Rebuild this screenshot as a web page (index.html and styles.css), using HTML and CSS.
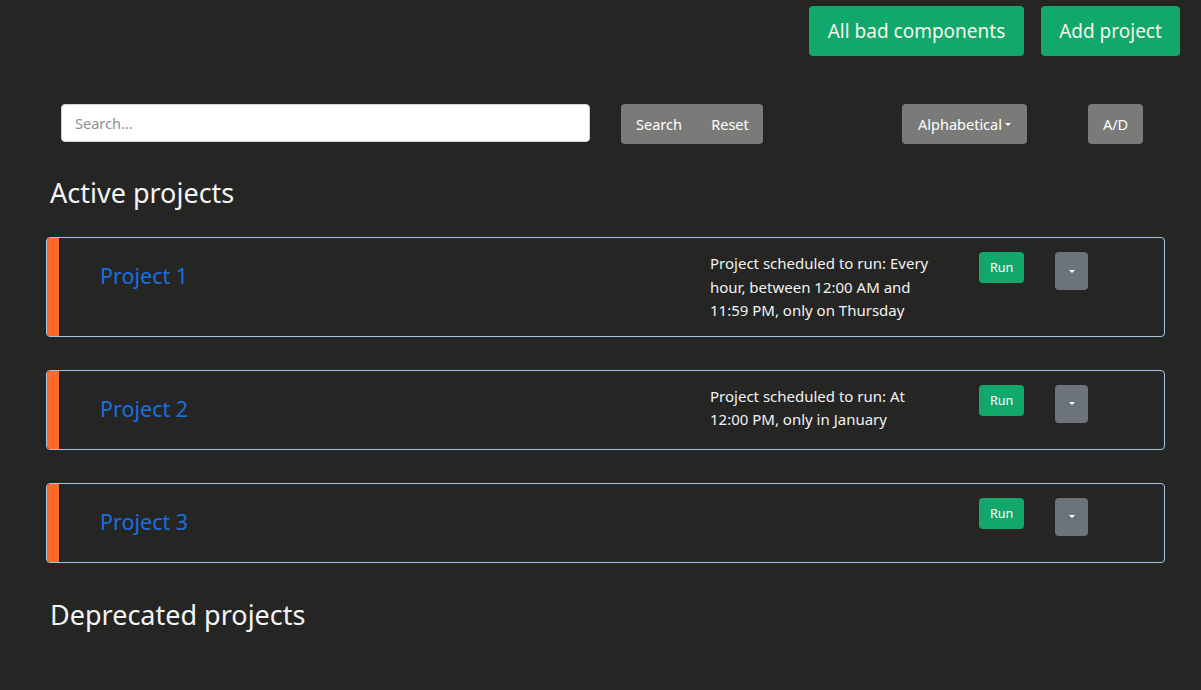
FILE: index.html
```html
<!DOCTYPE html>
<html lang="en">
<head>
<meta charset="utf-8">
<title>Projects</title>
<link rel="stylesheet" href="styles.css">
</head>
<body>
<div class="page">
  <div class="topbar">
    <button class="btn btn-green btn-lg">All bad components</button>
    <button class="btn btn-green btn-lg">Add project</button>
  </div>

  <div class="toolbar">
    <input class="search" type="text" placeholder="Search...">
    <div class="btn-group">
      <button class="btn btn-gray">Search</button>
      <button class="btn btn-gray">Reset</button>
    </div>
    <button class="btn btn-gray sort">Alphabetical<span class="caret"></span></button>
    <button class="btn btn-gray ad">A/D</button>
  </div>

  <h2 class="section-title">Active projects</h2>

  <div class="cards">
    <div class="card">
      <div class="card-bar"></div>
      <div class="card-body">
        <a class="card-title" href="#">Project 1</a>
        <div class="schedule">Project scheduled to run: Every hour, between 12:00 AM and 11:59 PM, only on Thursday</div>
        <button class="btn btn-green btn-sm">Run</button>
        <button class="btn btn-dd"><span class="caret"></span></button>
      </div>
    </div>
    <div class="card">
      <div class="card-bar"></div>
      <div class="card-body">
        <a class="card-title" href="#">Project 2</a>
        <div class="schedule">Project scheduled to run: At 12:00 PM, only in January</div>
        <button class="btn btn-green btn-sm">Run</button>
        <button class="btn btn-dd"><span class="caret"></span></button>
      </div>
    </div>
    <div class="card">
      <div class="card-bar"></div>
      <div class="card-body">
        <a class="card-title" href="#">Project 3</a>
        <div class="schedule"></div>
        <button class="btn btn-green btn-sm">Run</button>
        <button class="btn btn-dd"><span class="caret"></span></button>
      </div>
    </div>
  </div>

  <h2 class="section-title deprecated">Deprecated projects</h2>
</div>
</body>
</html>
```

FILE: styles.css
```css
* { box-sizing: border-box; }

html, body {
  margin: 0;
  background: #252624;
  height: 100%;
}

body {
  font-family: "Noto Sans", "Open Sans", sans-serif;
  color: #f2f2f2;
}

.page {
  padding: 6px 21px 0 0;
}

.btn {
  border: none;
  font-family: inherit;
  color: #fff;
  cursor: pointer;
  border-radius: 4px;
  display: inline-flex;
  align-items: center;
  justify-content: center;
  padding: 0;
  white-space: nowrap;
}

.btn-green { background: #13a86b; }
.btn-gray { background: #7a7b78; }

.topbar {
  display: flex;
  justify-content: flex-end;
  gap: 17px;
}

.btn-lg {
  height: 50px;
  font-size: 19px;
  color: #f4f6ee;
}
.topbar .btn-lg:first-child { width: 215px; }
.topbar .btn-lg:last-child { width: 139px; }

.toolbar {
  display: flex;
  align-items: flex-start;
  margin-top: 48px;
  padding-left: 61px;
}

.search {
  width: 529px;
  height: 38px;
  border: 1px solid #cfd4da;
  border-radius: 4px;
  padding: 0 13px;
  font-family: inherit;
  font-size: 14.5px;
  background: #fff;
}
.search::placeholder { color: #8a8f94; }

.btn-group {
  display: flex;
  margin-left: 31px;
}
.btn-group .btn {
  height: 40px;
  font-size: 14.5px;
}
.btn-group .btn:first-child { width: 76px; border-radius: 4px 0 0 4px; }
.btn-group .btn:last-child { width: 66px; border-radius: 0 4px 4px 0; }

.sort {
  margin-left: 139px;
  width: 125px;
  height: 40px;
  font-size: 14.5px;
}
.sort .caret { margin-left: 3px; }

.ad {
  margin-left: 61px;
  width: 55px;
  height: 40px;
  font-size: 14.5px;
}

.caret {
  display: inline-block;
  width: 0;
  height: 0;
  border-left: 3px solid transparent;
  border-right: 3px solid transparent;
  border-top: 3px solid #fff;
}

.section-title {
  margin: 33px 0 0 50px;
  font-size: 27px;
  font-weight: 400;
  line-height: 32px;
  color: #f4f4f4;
}

.cards {
  margin: 28px 0 0 46px;
  width: 1119px;
  display: flex;
  flex-direction: column;
  gap: 33px;
}

.card {
  display: flex;
  border: 1px solid #a9c1e1;
  border-radius: 4px;
  overflow: hidden;
}

.card-bar {
  width: 12px;
  background: #ff6a2b;
  flex: none;
}

.card-body {
  flex: 1;
  display: flex;
  align-items: flex-start;
  min-height: 78px;
  padding: 13px 76px 14px 41px;
}

.card-title {
  flex: 1;
  color: #1a6ee0;
  text-decoration: none;
  font-size: 21.5px;
  line-height: 50px;
}

.schedule {
  width: 250px;
  padding-right: 14px;
  padding-top: 1px;
  margin-bottom: -1px;
  font-size: 15px;
  line-height: 23.5px;
  color: #f2f2f2;
}

.btn-sm {
  margin-left: 19px;
  width: 45px;
  height: 31px;
  font-size: 12.5px;
  margin-top: 1px;
}

.btn-dd {
  margin-left: 31px;
  width: 33px;
  height: 38px;
  background: #6c737b;
  margin-top: 1px;
}

.deprecated {
  margin-top: 36px;
}
```
